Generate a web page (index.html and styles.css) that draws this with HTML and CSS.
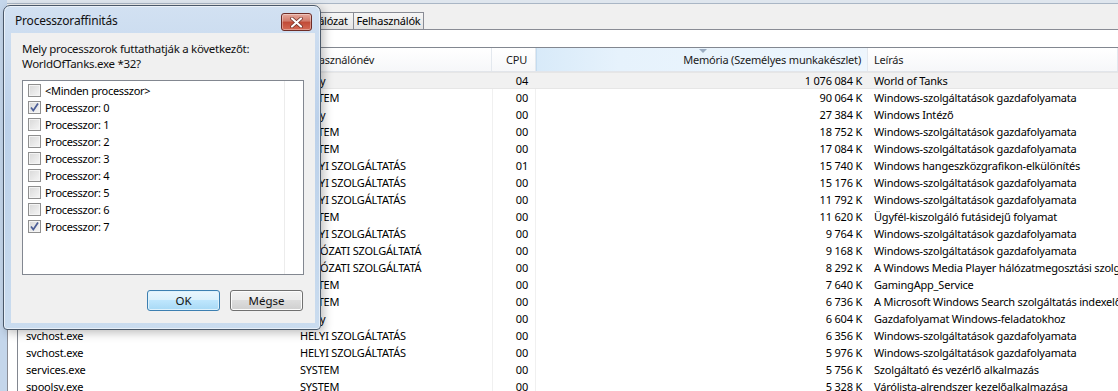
FILE: index.html
```html
<!DOCTYPE html>
<html>
<head>
    <title>Windows Feladatkezelő</title>
<link rel="stylesheet" href="styles.css">
</head>
<body>
    <div class="taskman">
        <div class="menuline"></div>
        <div class="tabbar">
            <div class="tab w75">Alkalmazások</div>
            <div class="tab w66">Folyamatok</div>
            <div class="tab w82">Szolgáltatások</div>
            <div class="tab w74">Teljesítmény</div>
            <div class="tab w49">Hálózat</div>
            <div class="tab w70">Felhasználók</div>
        </div>
        <div class="page">
            <div class="list">
                <div class="row hdr">
                    <div class="cell">Képnév</div>
                    <div class="cell">Felhasználónév</div>
                    <div class="cell num">CPU</div>
                    <div class="cell num sorted"><span class="arrow"></span>Memória (Személyes munkakészlet)</div>
                    <div class="cell">Leírás</div>
                </div>
                <div class="row sel"><div class="cell">WorldOfTanks.exe *32</div><div class="cell">Andy</div><div class="cell num">04</div><div class="cell num">1 076 084 K</div><div class="cell">World of Tanks</div></div>
                <div class="row"><div class="cell">svchost.exe</div><div class="cell">SYSTEM</div><div class="cell num">00</div><div class="cell num">90 064 K</div><div class="cell">Windows-szolgáltatások gazdafolyamata</div></div>
                <div class="row"><div class="cell">explorer.exe</div><div class="cell">Andy</div><div class="cell num">00</div><div class="cell num">27 384 K</div><div class="cell">Windows Intéző</div></div>
                <div class="row"><div class="cell">svchost.exe</div><div class="cell">SYSTEM</div><div class="cell num">00</div><div class="cell num">18 752 K</div><div class="cell">Windows-szolgáltatások gazdafolyamata</div></div>
                <div class="row"><div class="cell">svchost.exe</div><div class="cell">SYSTEM</div><div class="cell num">00</div><div class="cell num">17 084 K</div><div class="cell">Windows-szolgáltatások gazdafolyamata</div></div>
                <div class="row"><div class="cell">audiodg.exe</div><div class="cell">HELYI SZOLGÁLTATÁS</div><div class="cell num">01</div><div class="cell num">15 740 K</div><div class="cell">Windows hangeszközgrafikon-elkülönítés</div></div>
                <div class="row"><div class="cell">svchost.exe</div><div class="cell">HELYI SZOLGÁLTATÁS</div><div class="cell num">00</div><div class="cell num">15 176 K</div><div class="cell">Windows-szolgáltatások gazdafolyamata</div></div>
                <div class="row"><div class="cell">svchost.exe</div><div class="cell">HELYI SZOLGÁLTATÁS</div><div class="cell num">00</div><div class="cell num">11 792 K</div><div class="cell">Windows-szolgáltatások gazdafolyamata</div></div>
                <div class="row"><div class="cell">csrss.exe</div><div class="cell">SYSTEM</div><div class="cell num">00</div><div class="cell num">11 620 K</div><div class="cell">Ügyfél-kiszolgáló futásidejű folyamat</div></div>
                <div class="row"><div class="cell">svchost.exe</div><div class="cell">HELYI SZOLGÁLTATÁS</div><div class="cell num">00</div><div class="cell num">9 764 K</div><div class="cell">Windows-szolgáltatások gazdafolyamata</div></div>
                <div class="row"><div class="cell">svchost.exe</div><div class="cell">HÁLÓZATI SZOLGÁLTATÁ</div><div class="cell num">00</div><div class="cell num">9 168 K</div><div class="cell">Windows-szolgáltatások gazdafolyamata</div></div>
                <div class="row"><div class="cell">wmpnetwk.exe</div><div class="cell">HÁLÓZATI SZOLGÁLTATÁ</div><div class="cell num">00</div><div class="cell num">8 292 K</div><div class="cell">A Windows Media Player hálózatmegosztási szolgáltatása</div></div>
                <div class="row"><div class="cell">GamingAppService.exe</div><div class="cell">SYSTEM</div><div class="cell num">00</div><div class="cell num">7 640 K</div><div class="cell">GamingApp_Service</div></div>
                <div class="row"><div class="cell">SearchIndexer.exe</div><div class="cell">SYSTEM</div><div class="cell num">00</div><div class="cell num">6 736 K</div><div class="cell">A Microsoft Windows Search szolgáltatás indexelője</div></div>
                <div class="row"><div class="cell">taskhost.exe</div><div class="cell">Andy</div><div class="cell num">00</div><div class="cell num">6 604 K</div><div class="cell">Gazdafolyamat Windows-feladatokhoz</div></div>
                <div class="row"><div class="cell">svchost.exe</div><div class="cell">HELYI SZOLGÁLTATÁS</div><div class="cell num">00</div><div class="cell num">6 356 K</div><div class="cell">Windows-szolgáltatások gazdafolyamata</div></div>
                <div class="row"><div class="cell">svchost.exe</div><div class="cell">HELYI SZOLGÁLTATÁS</div><div class="cell num">00</div><div class="cell num">5 976 K</div><div class="cell">Windows-szolgáltatások gazdafolyamata</div></div>
                <div class="row"><div class="cell">services.exe</div><div class="cell">SYSTEM</div><div class="cell num">00</div><div class="cell num">5 756 K</div><div class="cell">Szolgáltató és vezérlő alkalmazás</div></div>
                <div class="row"><div class="cell">spoolsv.exe</div><div class="cell">SYSTEM</div><div class="cell num">00</div><div class="cell num">5 328 K</div><div class="cell">Várólista-alrendszer kezelőalkalmazása</div></div>
            </div>
        </div>
    </div>

    <!-- Processzoraffinitás ablak a feladatkezelő fölött -->
    <div class="dlg">
        <div class="titlebar">
            <div class="title">Processzoraffinitás</div>
            <div class="close">
                <svg width="13" height="11" viewBox="0 0 13 11">
                    <path d="M2 1.5 L11 9.5 M11 1.5 L2 9.5" stroke="#6b2a22" stroke-width="3.6" stroke-linecap="round"/>
                    <path d="M2 1.5 L11 9.5 M11 1.5 L2 9.5" stroke="#fff" stroke-width="2.2" stroke-linecap="round"/>
                </svg>
            </div>
        </div>
        <div class="client">
            <p class="question">Mely processzorok futtathatják a következőt:<br>WorldOfTanks.exe *32?</p>
            <div class="cpulist">
                <div class="item"><span class="cb"></span><span class="lbl">&lt;Minden processzor&gt;</span></div>
                <div class="item"><span class="cb checked"><svg width="11" height="11" viewBox="0 0 11 11"><path d="M2 5.5 L4.3 8.5 L9 1.5" fill="none" stroke="#4b5d96" stroke-width="1.7"/></svg></span><span class="lbl">Processzor: 0</span></div>
                <div class="item"><span class="cb"></span><span class="lbl">Processzor: 1</span></div>
                <div class="item"><span class="cb"></span><span class="lbl">Processzor: 2</span></div>
                <div class="item"><span class="cb"></span><span class="lbl">Processzor: 3</span></div>
                <div class="item"><span class="cb"></span><span class="lbl">Processzor: 4</span></div>
                <div class="item"><span class="cb"></span><span class="lbl">Processzor: 5</span></div>
                <div class="item"><span class="cb"></span><span class="lbl">Processzor: 6</span></div>
                <div class="item"><span class="cb checked"><svg width="11" height="11" viewBox="0 0 11 11"><path d="M2 5.5 L4.3 8.5 L9 1.5" fill="none" stroke="#4b5d96" stroke-width="1.7"/></svg></span><span class="lbl">Processzor: 7</span></div>
            </div>
            <div class="buttons">
                <button class="btn default">OK</button>
                <button class="btn">Mégse</button>
            </div>
        </div>
    </div>
</body>
</html>
```

FILE: styles.css
```css
body {
    margin: 0;
    width: 1118px;
    height: 391px;
    overflow: hidden;
    font-family: "Noto Sans", sans-serif;
    font-size: 11px;
    letter-spacing: -0.2px;
    color: #000;
    background: #f0f0f0;
}

.taskman {
    height: 391px;
    display: flex;
    flex-direction: column;
    border-left: 7px solid #c4d6eb;
}

.menuline {
    height: 3px;
    background: #dfe6ee;
    border-bottom: 1px solid #a9b6c5;
}

.tabbar {
    height: 25px;
    display: flex;
    align-items: flex-end;
}

.tab {
    flex: none;
    height: 16px;
    line-height: 15px;
    text-align: center;
    border: 1px solid #898c95;
    border-bottom: none;
    margin-right: -1px;
    background: linear-gradient(#f6f6f6, #e4e4e4);
    white-space: nowrap;
    overflow: hidden;
    box-sizing: content-box;
}

.w75 { width: 74px; }
.w66 { width: 65px; }
.w82 { width: 81px; }
.w74 { width: 73px; }
.w49 { width: 48px; }
.w70 { width: 69px; }

.page {
    flex: 1;
    background: #fff;
    border-top: 1px solid #898c95;
    border-left: 1px solid #898c95;
    padding: 17px 0 0 9px;
    overflow: hidden;
}

.list {
    border-top: 1px solid #828790;
    border-left: 1px solid #828790;
    white-space: nowrap;
}

.row {
    display: grid;
    grid-template-columns: 274px 200px 44px 332px 1fr;
    height: 17px;
    line-height: 17px;
    background: linear-gradient(to right, transparent 474px, #f0f0f0 474px, #f0f0f0 475px, transparent 475px, transparent 517px, #f0f0f0 517px, #f0f0f0 518px, transparent 518px);
}

.row.sel {
    background: #f1f1f1;
    box-shadow: inset 0 1px 0 #e6e6e6, inset 0 -1px 0 #e6e6e6;
}

.cell {
    overflow: hidden;
    padding-left: 8px;
}

.cell.num {
    text-align: right;
    padding-left: 0;
    padding-right: 8px;
}

.row .cell:nth-child(4) {
    padding-right: 6px;
}

.row .cell:nth-child(5) {
    padding-left: 6px;
}

.hdr {
    height: 24px;
    line-height: 23px;
    box-sizing: border-box;
    border-bottom: 1px solid #e2e5ea;
    background: linear-gradient(#ffffff, #f6f7f9);
    color: #1b1b1b;
}

.hdr .cell {
    border-right: 1px solid #e3e8ee;
}

.hdr .cell:nth-child(2) {
    padding-left: 6px;
}

.hdr .cell.sorted {
    position: relative;
    background: linear-gradient(to right, #d8eaf9, #e6f2fc 25%, #eef6fd);
    border-left: 1px solid #c4dcf0;
}

.arrow {
    position: absolute;
    top: 1px;
    left: 162px;
    width: 0;
    height: 0;
    border-left: 4px solid transparent;
    border-right: 4px solid transparent;
    border-top: 4px solid #9aabc0;
}

/* dialog */

.dlg {
    position: absolute;
    left: 3px;
    top: 5px;
    width: 318px;
    height: 325px;
    box-sizing: border-box;
    display: flex;
    flex-direction: column;
    padding: 0 5px 6px 7px;
    border: 1px solid #4a5869;
    border-radius: 7px 7px 4px 4px;
    background: linear-gradient(#d2e1f2, #bcd1ea 35%, #c2d6ec 70%, #cadcef);
    box-shadow: inset 0 0 0 1px rgba(255, 255, 255, 0.55), 3px 3px 10px rgba(0, 0, 0, 0.25);
    font-size: 11px;
    letter-spacing: -0.3px;
}

.titlebar {
    height: 27px;
    display: flex;
    justify-content: space-between;
    align-items: flex-start;
}

.title {
    padding: 7px 0 0 4px;
    line-height: 16px;
    font-size: 12px;
    letter-spacing: -0.2px;
    color: #111;
}

.close {
    margin: 7px 3px 0 0;
    width: 29px;
    height: 16px;
    display: flex;
    align-items: center;
    justify-content: center;
    border: 1px solid #6e2c26;
    border-radius: 3px;
    background: linear-gradient(#e6a99d, #d07a6a 45%, #c04a36 50%, #d46a55);
    box-shadow: inset 0 0 0 1px rgba(255, 255, 255, 0.35);
}

.client {
    flex: 1;
    background: #f0f0f0;
    padding: 8px 11px 0 11px;
}

.question {
    margin: 0;
    line-height: 15px;
    font-size: 11.5px;
    color: #111;
}

.cpulist {
    margin-top: 9px;
    height: 195px;
    box-sizing: border-box;
    border: 1px solid #828790;
    padding-top: 1px;
    background: #fff linear-gradient(to right, transparent 261px, #ececec 261px, #ececec 262px, transparent 262px);
}

.item {
    height: 17px;
    display: flex;
    align-items: center;
}

.cb {
    width: 13px;
    height: 13px;
    box-sizing: border-box;
    margin-left: 5px;
    border: 1px solid #8f8f8f;
    background: linear-gradient(135deg, #d8d8d8, #f6f6f6);
    box-shadow: inset 0 0 0 1px #f4f4f4;
    display: flex;
    align-items: center;
    justify-content: center;
}

.lbl {
    margin-left: 4px;
    line-height: 17px;
}

.buttons {
    margin-top: 15px;
    display: flex;
    justify-content: flex-end;
    gap: 10px;
    padding-right: 1px;
}

.btn {
    width: 73px;
    height: 21px;
    padding: 0;
    font-family: "Noto Sans", sans-serif;
    font-size: 11.5px;
    color: #111;
    border: 1px solid #707070;
    border-radius: 3px;
    background: linear-gradient(#f2f2f2, #ebebeb 50%, #dddddd 50%, #cfcfcf);
    box-shadow: inset 0 0 0 1px #fcfcfc;
}

.btn.default {
    border-color: #3c7fb1;
    background: linear-gradient(#eaf6fd, #d9f0fc 50%, #bee6fd 50%, #a7d9f5);
    box-shadow: inset 0 0 0 1px #dff2fc;
}
```
